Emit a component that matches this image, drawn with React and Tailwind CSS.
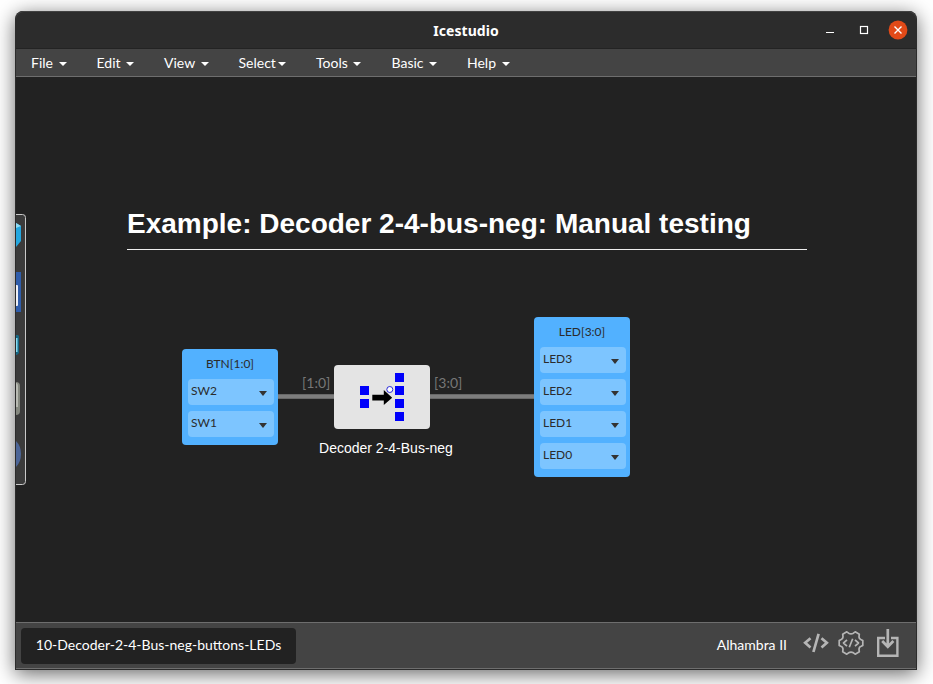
import React from "react";

const LATO = "font-['Lato',sans-serif]";
const ARIAL = "font-['Liberation_Sans',Arial,sans-serif]";

const MENUS = [
  { label: "File", width: "w-[65.5px]", text: "w-[28px]" },
  { label: "Edit", width: "w-[67.5px]", text: "w-[29.5px]" },
  { label: "View", width: "w-[74.5px]", text: "w-[37px]" },
  { label: "Select", width: "w-[77.5px]", text: "w-[39.5px]" },
  { label: "Tools", width: "w-[75.5px]", text: "w-[37px]" },
  { label: "Basic", width: "w-[75.5px]", text: "w-[37.5px]" },
  { label: "Help", width: "w-[60px]", text: "w-[35px]" },
];

function TitleBar() {
  return (
    <header className="relative flex h-[38px] shrink-0 items-center justify-center rounded-t-lg border-b border-[#232323] bg-[#2c2c2c] shadow-[inset_0_1px_0_#424242]">
      <h1 className="mt-[2px] font-['Noto_Sans',sans-serif] text-[14px] leading-5 font-bold tracking-[0.08px] text-white">
        Icestudio
      </h1>
      <svg className="absolute top-[8px] right-[7px]" width="84" height="22" viewBox="0 0 84 22" fill="none">
        <path d="M1 13.5h8" stroke="#fff" />
        <rect x="35.5" y="7.5" width="7" height="7" stroke="#fff" strokeWidth="1.2" />
        <circle cx="73" cy="11" r="9.4" fill="#e24a18" />
        <path d="m69.5 7.5 7 7m0-7-7 7" stroke="#fff" strokeWidth="1.4" />
      </svg>
    </header>
  );
}

function MenuBar() {
  return (
    <nav className={`${LATO} flex h-[28px] shrink-0 items-center border-b border-[#6e6e6e] bg-[#444] pl-[15px] text-[14px] leading-5 text-white`}>
      {MENUS.map((m) => (
        <div key={m.label} className={`${m.width} flex items-center`}>
          <span className={`${m.text} whitespace-nowrap`}>{m.label}</span>
          <span className="mt-[2px] border-x-4 border-t-4 border-x-transparent border-t-white" />
        </div>
      ))}
    </nav>
  );
}

function SideDock() {
  return (
    <svg className="absolute top-[137px] left-0" width="10" height="272" viewBox="0 0 10 272">
      <path d="M0 .5h6.5q3 0 3 3v264q0 3-3 3H0" fill="#3b3b3b" stroke="#c9c9c9" />
      <path d="M0 9l5 3v15l-5 6z" fill="#24a7df" />
      <path d="M0 9l5 3-5 2z" fill="#8fdcf5" />
      <path d="M0 58h5v40H0z" fill="#2f5dab" />
      <path d="M0 71h1q1 0 1 1v19q0 1-1 1H0z" fill="#eef0f6" />
      <path d="M0 121h2l1 1v17l-2 2H0z" fill="#176783" />
      <path d="M0 124h1.5v14H0z" fill="#85dcf3" />
      <path d="M0 168q4 0 4 4v25q0 4-4 4z" fill="#85887f" />
      <path d="M0 169q2 0 2 4v20H0z" fill="#b8bab2" />
      <path d="M0 227q5 5 5 13t-5 13z" fill="#4c6597" />
    </svg>
  );
}

function PortBlock({ name, pins, position }) {
  return (
    <section className={`${LATO} ${position} absolute w-24 rounded bg-[#52b1ff] pb-2 text-[#2b2b2b]`}>
      <h3 className="h-[30px] pt-[7px] text-center text-[12px] leading-4">{name}</h3>
      <div className="flex flex-col gap-[6px] pr-1 pl-[6px]">
        {pins.map((pin) => (
          <div key={pin} className="flex h-[26px] items-center justify-between rounded bg-[#7dc5ff] pr-[7px] pl-[3px]">
            <span className="-mt-[2px] text-[12px] leading-4">{pin}</span>
            <span className="mt-[3px] border-x-4 border-t-[5px] border-x-transparent border-t-[#333]" />
          </div>
        ))}
      </div>
    </section>
  );
}

function DecoderBlock() {
  return (
    <>
      <svg className="absolute top-[288px] left-[318px] rounded bg-[#e4e4e4]" width="96" height="64" viewBox="0 0 96 64">
        <g fill="#0000fb">
          <path d="M26 21h9v9h-9zM26 34h9v9h-9z" />
          <path d="M61 8h9v9h-9zM61 21h9v9h-9zM61 34h9v9h-9zM61 47h9v9h-9z" />
        </g>
        <path d="M38.3 29.8h11.5V25l8.4 7.7-8.4 7.4v-4.5H38.3z" fill="#000" />
        <circle cx="55.8" cy="24.5" r="3" fill="#fff" stroke="#2828d8" />
      </svg>
      <p className={`${ARIAL} absolute top-[361px] left-[286px] w-[168px] text-center text-[14px] leading-5 text-white`}>
        Decoder 2-4-Bus-neg
      </p>
    </>
  );
}

function Wire({ position, label, labelPosition }) {
  return (
    <>
      <div className={`${position} absolute top-[317px] h-[5px] border-y border-[#686868] bg-[#7d7d7d]`} />
      <span className={`${LATO} ${labelPosition} absolute top-[296px] text-[14px] leading-5 text-[#777]`}>{label}</span>
    </>
  );
}

function Canvas() {
  return (
    <main className="relative flex-1 overflow-hidden bg-[#222]">
      <SideDock />
      <h2 className={`${ARIAL} absolute top-[128px] left-[111px] h-[45px] w-[680px] border-b border-[#eee] text-[28px] leading-[38px] font-bold whitespace-nowrap text-white`}>
        Example: Decoder 2-4-bus-neg: Manual testing
      </h2>
      <Wire position="left-[262px] w-[56px]" label="[1:0]" labelPosition="left-[286px]" />
      <Wire position="left-[414px] w-[104px]" label="[3:0]" labelPosition="left-[418px]" />
      <PortBlock name="BTN[1:0]" pins={["SW2", "SW1"]} position="top-[272px] left-[166px]" />
      <DecoderBlock />
      <PortBlock name="LED[3:0]" pins={["LED3", "LED2", "LED1", "LED0"]} position="top-[240px] left-[518px]" />
    </main>
  );
}

function CodeIcon() {
  return (
    <svg width="26" height="20" viewBox="0 0 26 20" fill="none" stroke="#b5b5b5" strokeWidth="2.7">
      <path d="M7.5 5.2 2.2 9.8l5.3 4.6M18.5 5.2 23.8 9.8l-5.3 4.6M15.6.8 10.4 19" />
    </svg>
  );
}

function GearCodeIcon() {
  return (
    <svg width="26" height="26" viewBox="0 0 26 26" fill="none" stroke="#b5b5b5" strokeWidth="1.7" strokeLinejoin="round">
      <path d="M8.8 1.8 10.6 3.2Q13 4.6 15.4 3.2L17.2 1.8 21.3 4.2 21 6.6Q21 9 23.2 9.7L24.8 10.5V15.5L23.2 16.3Q21 17 21 19.4L21.3 21.8 17.2 24.2 15.4 22.8Q13 21.4 10.6 22.8L8.8 24.2 4.7 21.8 5 19.4Q5 17 2.8 16.3L1.2 15.5V10.5L2.8 9.7Q5 9 5 6.6L4.7 4.2Z" />
      <path d="M9 9.8 5.5 13 9 16.2M17 9.8l3.5 3.2-3.5 3.2M14.7 8.8l-3.4 8.4" />
    </svg>
  );
}

function DownloadIcon() {
  return (
    <svg width="22" height="28" viewBox="0 0 22 28" fill="none" stroke="#b5b5b5">
      <path d="M8 9H1.2v17.7h19.2V9H14" strokeWidth="2.4" />
      <path d="M10.8 0v17M5.2 12l5.6 5.8 5.6-5.8" strokeWidth="2.7" />
    </svg>
  );
}

function Footer() {
  return (
    <footer className={`${LATO} flex h-[47px] shrink-0 items-center border-t border-b border-t-[#6e6e6e] border-b-[#6e6e6e] bg-[#444] pr-[17px] pl-[5px] text-[14px] text-white`}>
      <div className="flex h-9 w-[275px] items-center justify-center rounded bg-[#222] pb-[2px] leading-5">
        10-Decoder-2-4-Bus-neg-buttons-LEDs
      </div>
      <span className="mb-[2px] ml-auto leading-5">Alhambra II</span>
      <div className="mb-[2px] ml-4 flex items-center">
        <div className="-mt-1"><CodeIcon /></div>
        <div className="-mt-1 ml-[9px]"><GearCodeIcon /></div>
        <div className="-mt-1 ml-[13px]"><DownloadIcon /></div>
      </div>
    </footer>
  );
}

export default function App() {
  return (
    <div className="h-[684px] w-[933px] overflow-hidden bg-white pt-[11px] pl-[15px]">
      <div className="flex h-[659px] w-[902px] flex-col rounded-t-lg border-x border-b border-[#2c2c2c] bg-[#2c2c2c] shadow-[0_4px_20px_rgba(0,0,0,0.6)]">
        <TitleBar />
        <MenuBar />
        <Canvas />
        <Footer />
      </div>
    </div>
  );
}
